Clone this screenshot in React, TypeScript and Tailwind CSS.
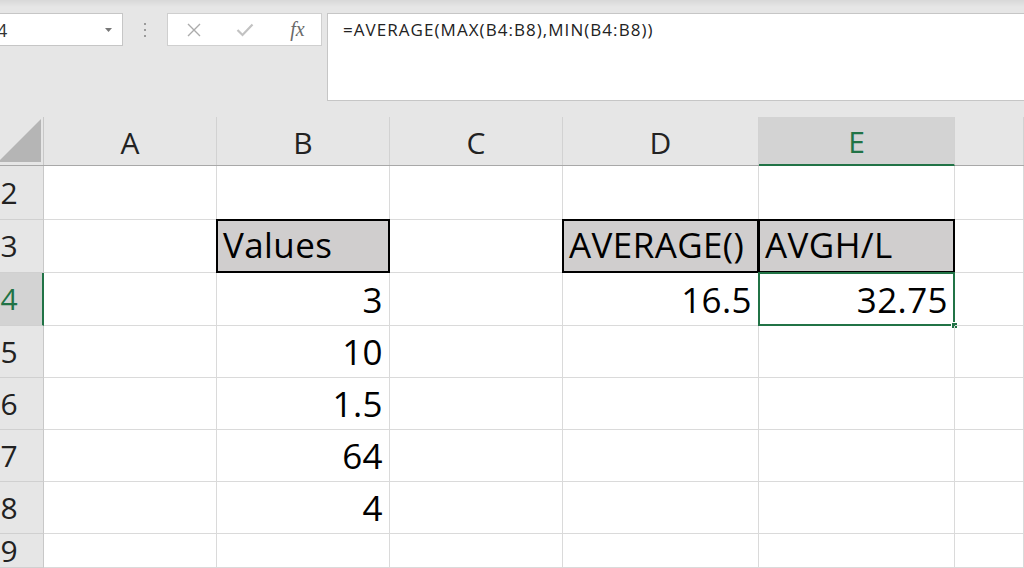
import React from "react";

type CellDef = { text: string; align: "left" | "right"; kind: "hdr" | "data" };

const CELLS: Record<string, CellDef> = {
  B3: { text: "Values", align: "left", kind: "hdr" },
  D3: { text: "AVERAGE()", align: "left", kind: "hdr" },
  E3: { text: "AVGH/L", align: "left", kind: "hdr" },
  B4: { text: "3", align: "right", kind: "data" },
  D4: { text: "16.5", align: "right", kind: "data" },
  E4: { text: "32.75", align: "right", kind: "data" },
  B5: { text: "10", align: "right", kind: "data" },
  B6: { text: "1.5", align: "right", kind: "data" },
  B7: { text: "64", align: "right", kind: "data" },
  B8: { text: "4", align: "right", kind: "data" },
};

const COLS: { key: string; w: string }[] = [
  { key: "A", w: "w-[173px]" },
  { key: "B", w: "w-[173px]" },
  { key: "C", w: "w-[173px]" },
  { key: "D", w: "w-[196px]" },
  { key: "E", w: "w-[196px]" },
  { key: "F", w: "flex-1" },
];

const ROWS: { n: number; h: string }[] = [
  { n: 2, h: "h-[54px]" },
  { n: 3, h: "h-[53px]" },
  { n: 4, h: "h-[53px]" },
  { n: 5, h: "h-[52px]" },
  { n: 6, h: "h-[52px]" },
  { n: 7, h: "h-[52px]" },
  { n: 8, h: "h-[52px]" },
  { n: 9, h: "flex-1" },
];

function TopBar() {
  return (
    <div className="h-[117px] flex items-start pt-[13px] bg-[linear-gradient(#d8d8d8,#e6e6e6_7px)]">
      {/* Name box */}
      <div className="w-[123px] h-[33px] bg-white border border-l-0 border-[#c6c6c6] flex items-center justify-between pr-[10px] overflow-hidden">
        <span className="-ml-[3px] text-[18px] leading-none text-[#333]">4</span>
        <svg width="7" height="4" viewBox="0 0 7 4">
          <path d="M0 0 L7 0 L3.5 4 Z" fill="#777" />
        </svg>
      </div>
      {/* Dots */}
      <div className="w-[44px] h-[33px] flex flex-col items-center justify-center gap-[4px]">
        <div className="w-[2px] h-[2px] bg-[#9a9a9a]" />
        <div className="w-[2px] h-[2px] bg-[#9a9a9a]" />
        <div className="w-[2px] h-[2px] bg-[#9a9a9a]" />
      </div>
      {/* Buttons */}
      <div className="w-[155px] h-[33px] bg-white border border-[#cfcfcf] grid grid-cols-3 items-center justify-items-center">
        <svg width="16" height="16" viewBox="0 0 16 16">
          <path d="M2 2 L14 14 M14 2 L2 14" stroke="#ababab" strokeWidth="1.4" fill="none" />
        </svg>
        <svg width="18" height="14" viewBox="0 0 18 14">
          <path d="M1.5 7 L6.5 12 L16.5 1.5" stroke="#c2c2c2" strokeWidth="2.2" fill="none" />
        </svg>
        <span className="font-['Liberation_Serif',serif] italic text-[20px] leading-none text-[#6a6a6a] pb-[2px] pl-[4px]">
          fx
        </span>
      </div>
      {/* Formula bar */}
      <div className="ml-[5px] flex-1 h-[88px] bg-white border border-r-0 border-[#c6c6c6] pl-[15px] pt-[4px]">
        <span className="text-[17px] leading-[24px] tracking-[1.05px] text-[#222]">
          =AVERAGE(MAX(B4:B8),MIN(B4:B8))
        </span>
      </div>
    </div>
  );
}

function HeaderRow() {
  return (
    <div className="h-[49px] flex border-b border-[#a8a8a8] bg-[#e6e6e6]">
      <div className="w-[44px] relative border-r border-[#c8c8c8]">
        <svg className="absolute right-[2px] bottom-[3px]" width="43" height="43" viewBox="0 0 43 43">
          <path d="M43 0 L43 43 L0 43 Z" fill="#b5b5b5" />
        </svg>
      </div>
      {COLS.map((c) => {
        const sel = c.key === "E";
        return (
          <div
            key={c.key}
            className={
              c.w +
              " flex items-center justify-center pt-[3px] text-[30px] leading-none border-r border-[#d2d2d2] " +
              (sel ? "bg-[#d3d3d3] text-[#217346] border-b-2 border-b-[#217346] -mb-px" : "text-[#222]")
            }
          >
            {c.key === "F" ? "" : c.key}
          </div>
        );
      })}
    </div>
  );
}

function Cell({ id, w }: { id: string; w: string }) {
  const def = CELLS[id];
  const isHdr = def?.kind === "hdr";
  const sel = id === "E4";
  return (
    <div
      className={
        w +
        " relative flex items-end border-r border-b border-[#dadada] text-[35px] tracking-[0.4px] leading-none text-black " +
        (isHdr ? "bg-[#d0cece] pb-[10px] pl-[6px]" : "pb-[8px] pr-[6px]") +
        (def?.align === "right" ? " justify-end" : "")
      }
    >
      {def ? <span className="whitespace-nowrap">{def.text}</span> : null}
      {isHdr ? (
        <div className="absolute -left-px -top-px right-[-1px] bottom-[-1px] border-2 border-black pointer-events-none" />
      ) : null}
      {sel ? (
        <>
          <div className="absolute -left-px -top-px right-[-1px] bottom-[-1px] border-2 border-[#217346] pointer-events-none" />
          <div className="absolute right-[-4px] bottom-[-4px] w-[7px] h-[7px] bg-[#217346] border border-white" />
        </>
      ) : null}
    </div>
  );
}

function Sheet() {
  return (
    <div className="flex flex-col h-[451px]">
      <HeaderRow />
      {ROWS.map((r) => {
        const selRow = r.n === 4;
        return (
          <div key={r.n} className={r.h + " flex"}>
            <div
              className={
                "w-[44px] overflow-hidden flex items-center border-b border-[#d0d0d0] " +
                (selRow
                  ? "bg-[#d3d3d3] text-[#217346] border-r-2 border-r-[#217346]"
                  : "bg-[#e6e6e6] text-[#222] border-r border-r-[#c8c8c8]")
              }
            >
              <div className="w-[62px] shrink-0 -ml-[22px] flex justify-center text-[30px] leading-none">
                {r.n}
              </div>
            </div>
            {COLS.map((c) => (
              <Cell key={c.key} id={c.key + r.n} w={c.w} />
            ))}
          </div>
        );
      })}
    </div>
  );
}

export default function App() {
  return (
    <div className="w-[1024px] h-[568px] overflow-hidden bg-white font-['Open_Sans',sans-serif]">
      <TopBar />
      <Sheet />
    </div>
  );
}
